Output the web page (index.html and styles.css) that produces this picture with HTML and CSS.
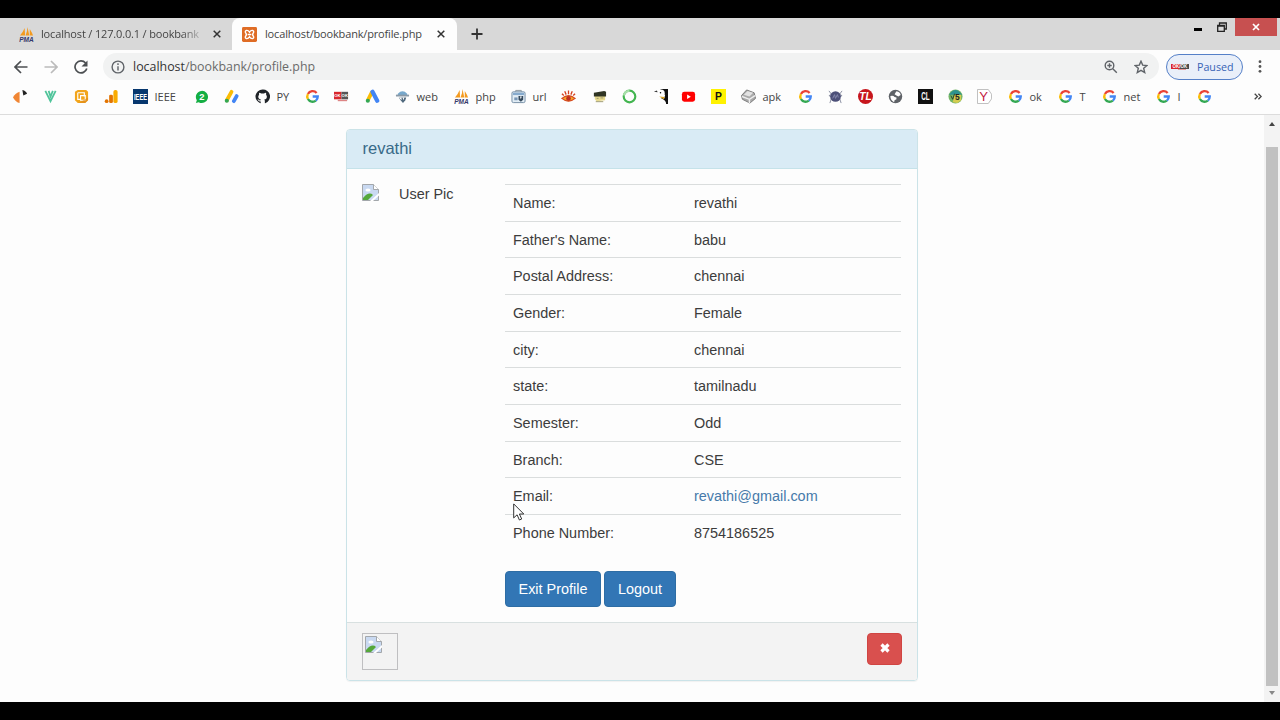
FILE: index.html
```html
<!DOCTYPE html>
<html lang="en">
<head>
  <meta charset="UTF-8">
  <title>localhost/bookbank/profile.php</title>
  <link rel="stylesheet" href="styles.css">
</head>
<body>
  <svg class="defs" width="0" height="0">
    <symbol id="google" viewBox="0 0 16 16">
      <g fill="none" stroke-width="2.5">
        <path d="M12.4 4.2A5.7 5.7 0 0 0 3.1 5.3" stroke="#ea4335"/>
        <path d="M3.1 5.3A5.7 5.7 0 0 0 3.1 10.7" stroke="#fbbc05"/>
        <path d="M3.1 10.7A5.7 5.7 0 0 0 11.6 12.4" stroke="#34a853"/>
        <path d="M11.6 12.4A5.7 5.7 0 0 0 13.6 8H8.2" stroke="#4285f4"/>
      </g>
    </symbol>
    <symbol id="broken" viewBox="0 0 17 17">
      <path d="M.5.500h11l5 5v11H.5z" fill="#c9d9f1" stroke="#a3a7ab"/>
      <path d="M11.500.500v5h5" fill="#fff" stroke="#a3a7ab"/>
      <ellipse cx="6" cy="6" rx="2.600" ry="1.600" fill="#fff"/>
      <path d="M1 16v-2q6-7 10-3l-5 5z" fill="#55a83b"/>
      <path d="M8 17L17 9v2.500L11 17z" fill="#fff"/>
    </symbol>
  </svg>

  <div class="tab-strip">
    <div class="tab">
      <svg class="icon" viewBox="0 0 16 16"><path d="M1 9Q4 6 6 1L6.500 9zM7 9Q9 5 9 0L11 9zM11.500 9V2Q14 6 15 9z" fill="#f39a1f"/><text x="8" y="15.700" class="pma-text">PMA</text></svg>
      <span class="tab-title faded">localhost / 127.0.0.1 / bookbank</span>
      <svg class="tab-close" viewBox="0 0 8 8"><path d="M.7.7l6.600 6.600M7.300.7L.7 7.300"/></svg>
    </div>
    <div class="tab active">
      <svg class="icon" viewBox="0 0 16 16">
        <rect width="16" height="16" rx="1.500" fill="#df6c25"/>
        <path d="M8 5.500C6 2.500 2.500 3.500 3.800 6Q5.500 8 3.800 10C2.500 12.500 6 13.500 8 10.500C10 13.500 13.500 12.500 12.200 10Q10.500 8 12.200 6C13.500 3.500 10 2.500 8 5.500zM6 8h4" fill="none" stroke="#fff" stroke-width="1.500"/>
      </svg>
      <span class="tab-title">localhost/bookbank/profile.php</span>
      <svg class="tab-close" viewBox="0 0 8 8"><path d="M.7.7l6.600 6.600M7.300.7L.7 7.300"/></svg>
    </div>
    <svg class="new-tab" viewBox="0 0 12 12"><path d="M6 .5v11M.5 6h11"/></svg>
    <div class="window-controls">
      <svg class="minimize" viewBox="0 0 8 3"><path d="M0 0h8v3H0z"/></svg>
      <svg class="restore" viewBox="0 0 10 10"><path d="M.7 3.500h6.600v5.800H.7zM.7 4h6.600M2.500 3V1h6.800v6H7.500"/></svg>
      <div class="window-close"><svg viewBox="0 0 8 8"><path d="M1 1l6 6M7 1L1 7"/></svg></div>
    </div>
  </div>

  <div class="toolbar">
    <svg class="nav" viewBox="0 0 14 14"><path d="M13.500 7H1.500M7 1L1 7l6 6"/></svg>
    <svg class="nav disabled" viewBox="0 0 14 14"><path d="M.5 7h12M7 1l6 6-6 6"/></svg>
    <svg class="nav" viewBox="0 0 14 14"><path d="M11.600 3A6 6 0 1 0 12.800 8.500"/><path class="solid" d="M13.500.5v6h-6z"/></svg>
    <div class="omnibox">
      <svg class="info" viewBox="0 0 14 14"><circle cx="7" cy="7" r="5.900"/><path d="M7 6.200v4.300M7 3.300v1.600"/></svg>
      <span class="url">localhost<em>/bookbank/profile.php</em></span>
      <svg class="zoom" viewBox="0 0 14 14"><circle cx="5.500" cy="5.500" r="4.300"/><path d="M8.800 8.800l4 4M3.300 5.500h4.400M5.500 3.300v4.400"/></svg>
      <svg class="star" viewBox="0 0 14 14"><path d="M7 1.200l1.700 3.900 4.200.4-3.200 2.800 1 4.200L7 10.300l-3.700 2.200 1-4.200L1.100 5.500l4.200-.4z"/></svg>
    </div>
    <div class="profile">
      <svg viewBox="0 0 18 8">
        <path fill="#d9262c" d="M0 1h10L8 6H0z"/><path fill="#4a4a4a" d="M10 1h8v5H8z"/><path fill="#e69999" d="M7 6h8v1H7z"/>
        <text x="9" y="5.200" class="paused-text">OK/OK</text>
      </svg>
      <span>Paused</span>
    </div>
    <svg class="menu" viewBox="0 0 4 13"><circle cx="2" cy="1.700" r="1.400"/><circle cx="2" cy="6.500" r="1.400"/><circle cx="2" cy="11.300" r="1.400"/></svg>
  </div>

  <div class="bookmarks">
    <div class="bookmark"><svg class="icon" viewBox="0 0 16 16"><path d="M0 9q2-4 7-6v12q-4-1-7-6z" fill="#f08634"/><path d="M10 1q4 1 5 4l-4 2z" fill="#222"/></svg></div>
    <div class="bookmark"><svg class="icon" viewBox="0 0 16 16"><path d="M2.500 2l5.500 11 5.500-11M6 2l2 6 2.500-6" fill="none" stroke="#4fc49a" stroke-width="1.900"/></svg></div>
    <div class="bookmark"><svg class="icon" viewBox="0 0 16 16"><path d="M4 1h9l2 2v9l-3 3H4l-3-3V3z" fill="#f2a51c"/><path d="M4 4h7v4M4 4v7h3M7 7h5v5H7z" fill="none" stroke="#fff" stroke-width="1.200"/><path d="M5 15L15 9v3l-3 3z" fill="#dc851b" opacity=".6"/></svg></div>
    <div class="bookmark"><svg class="icon" viewBox="0 0 16 16"><rect x="10" y="1" width="4.500" height="14" rx="2" fill="#f9ab00"/><rect x="5.500" y="6" width="4" height="9" rx="1.500" fill="#e37400"/><circle cx="2.800" cy="13" r="2" fill="#e37400"/></svg></div>
    <div class="bookmark"><svg class="icon" viewBox="0 0 16 16"><path d="M0 0h16v16H0z" fill="#07376e"/><text x="8" y="11.500" class="ieee-text" textLength="14" lengthAdjust="spacingAndGlyphs">IEEE</text></svg><span>IEEE</span></div>
    <div class="bookmark"><svg class="icon" viewBox="0 0 16 16"><path d="M8 2a6.500 6.500 0 1 1-3 12l-3 1 1-3A6.500 6.500 0 0 1 8 2z" fill="#14ae43"/><text x="8.500" y="12" class="badge-text">2</text></svg></div>
    <div class="bookmark"><svg class="icon" viewBox="0 0 16 16"><path d="M3 12L8 3" stroke="#fbbc04" stroke-width="4" stroke-linecap="round"/><path d="M10.500 13l3-5.500" stroke="#4285f4" stroke-width="4" stroke-linecap="round"/><circle cx="3" cy="12.500" r="2.200" fill="#34a853"/></svg></div>
    <div class="bookmark"><svg class="icon" viewBox="0 0 16 16"><path d="M8 .5a7.500 7.500 0 0 0-2.400 14.600c.4.100.5-.2.500-.4v-1.400c-2.100.4-2.600-1-2.700-1.300-.3-.7-.7-1-.9-1.100 1.700-.3 1.800 1.300 2.800 1.300.5 0 .9-.2 1-.9-3-.4-3.500-3.800-1.900-5.300-.2-.7-.1-1.400.1-2 .8 0 1.500.4 2.100.9 1-.2 2-.2 3 0 .6-.5 1.300-.9 2.100-.9.200.6.300 1.300.1 2 1.600 1.600 1 4.900-1.900 5.300.4.400.6.900.6 1.600v1.900c0 .2.100.4.400.3A7.500 7.500 0 0 0 8 .5z" fill="#1f2328"/></svg><span>PY</span></div>
    <div class="bookmark"><svg class="icon"><use href="#google"/></svg></div>
    <div class="bookmark"><svg class="icon" viewBox="0 0 16 16"><path fill="#d9262c" d="M0 3h8v8H0z"/><path fill="#555" d="M8 3h7v8H8z"/><path fill="#dd8585" d="M4 11.500h10V13H4z"/><text x="7.500" y="9" class="ok-text">OK OK</text></svg></div>
    <div class="bookmark"><svg class="icon" viewBox="0 0 16 16"><path d="M7.500 3L3 12" stroke="#fbbc04" stroke-width="4"/><path d="M8 3l5 9.500" stroke="#4285f4" stroke-width="4.500" stroke-linecap="round"/><circle cx="3" cy="12.500" r="2.200" fill="#34a853"/></svg></div>
    <div class="bookmark"><svg class="icon" viewBox="0 0 16 16"><path d="M3 5q5-5 10 0v2H3z" fill="#77a8cc"/><path d="M1 6h14v2H1z" fill="#8999a7"/><path d="M4 9h8l-1 3-2.500 3L6 12z" fill="#50697d"/><path d="M4 9h3v3zM8 9h2l-1 3z" fill="#fff"/></svg><span>web</span></div>
    <div class="bookmark"><svg class="icon" viewBox="0 0 16 16"><path d="M1 9Q4 6 6 1L6.500 9zM7 9Q9 5 9 0L11 9zM11.500 9V2Q14 6 15 9z" fill="#f39a1f"/><text x="8" y="15.700" class="pma-text">PMA</text></svg><span>php</span></div>
    <div class="bookmark"><svg class="icon" viewBox="0 0 16 16"><path d="M5 3V1.500h6V3" fill="none" stroke="#8b949c"/><rect x="1" y="3" width="14" height="11.500" rx="1.500" fill="#e2edf5" stroke="#718ba2"/><path d="M2 4h12v2.500H2z" fill="#86aacd"/><path d="M3.500 9H7v3H3.500z" fill="#7795b4"/><path d="M8 7.500h5v4l-2.500 2L8 11.500z" fill="#35495c"/><path d="M9.500 8h2l-1 3z" fill="#fff"/></svg><span>url</span></div>
    <div class="bookmark"><svg class="icon" viewBox="0 0 16 16"><path d="M1 10q7-6 14 0-7 6-14 0z" fill="#f6a52b" stroke="#d54a22" stroke-width="1.400"/><circle cx="8" cy="10" r="2.500" fill="#be2d20"/><path d="M1 5l2 2M4 2.500L5.500 6M8 1.500v4M12 2.500L10.500 6M15 5l-2 2" stroke="#d54020" stroke-width="1.400"/></svg></div>
    <div class="bookmark"><svg class="icon" viewBox="0 0 16 16"><path d="M3 7h11v5l-9 1-2-2z" fill="#e6d98e"/><path d="M2 4l11-2 2 1v5L2 8z" fill="#303524"/><path d="M5 10h2M9 9.500h3M4 13.500h8" stroke="#9a966b"/></svg></div>
    <div class="bookmark"><svg class="icon" viewBox="0 0 16 16"><circle cx="8" cy="8" r="6.200" fill="none" stroke="#43b550" stroke-width="2.300"/><path d="M2 7a6.200 6.200 0 0 1 6-5" fill="none" stroke="#a9dfaa" stroke-width="2.300"/></svg></div>
    <div class="bookmark"><svg class="icon" viewBox="0 0 16 16"><path d="M8 0h8v16h-2q0-4-5-6z" fill="#111"/><ellipse cx="8.500" cy="4.500" rx="4" ry="4" fill="#fff"/><path d="M6 5l7 1-1 4-5-1z" fill="#fff"/><path d="M1 3l3-1.500 1 2" fill="#333"/><path d="M6.500 8l6 .5-1 2.500z" fill="#dba322"/><circle cx="8" cy="4" r=".8"/></svg></div>
    <div class="bookmark"><svg class="icon" viewBox="0 0 16 16"><rect x="1" y="3" width="14" height="10.500" rx="2.500" fill="#f00"/><path d="M6.500 5.800l4 2.400-4 2.400z" fill="#fff"/></svg></div>
    <div class="bookmark"><svg class="icon" viewBox="0 0 16 16"><path d="M0 0h16v16H0z" fill="#fff200"/><text x="8" y="12" class="p-text">P</text></svg></div>
    <div class="bookmark"><svg class="icon" viewBox="0 0 16 16"><path d="M.5 7L6 1l8 3 1.500 6-6 5-8-4z" fill="#aaa" stroke="#777"/><path d="M3 6l4-4 6 2-4 4z" fill="#e2e2e2"/><path d="M1 8l8 3 6-4M9 11v4" fill="none" stroke="#eee" stroke-width="1.500"/></svg><span>apk</span></div>
    <div class="bookmark"><svg class="icon"><use href="#google"/></svg></div>
    <div class="bookmark"><svg class="icon" viewBox="0 0 16 16"><path d="M1 2l3 4-3 1 3 2-2 6M15 2l-3 4 3 1-3 2 2 6" fill="none" stroke="#888da0"/><circle cx="8" cy="8" r="5.700" fill="#4c5078"/><path d="M5 10l2-4 1 4 2-4 1 3" fill="none" stroke="#8589ad"/></svg></div>
    <div class="bookmark"><svg class="icon" viewBox="0 0 16 16"><circle cx="8" cy="8" r="8" fill="#c7161d"/><text x="8" y="12" class="tl-text">TL</text></svg></div>
    <div class="bookmark"><svg class="icon" viewBox="0 0 16 16"><circle cx="8" cy="8" r="7.200" fill="#5f6368"/><path d="M2.500 7.500q3-1 4.500 1l2 .5v2l-2 1-.5 2q-4-2-4-6.500zM9 2.500q4 .5 4.500 4L11 8 9 7 7 5.500z" fill="#fff"/></svg></div>
    <div class="bookmark"><svg class="icon" viewBox="0 0 16 16"><path d="M0 0h16v16H0z" fill="#111"/><text x="8" y="12" class="cl-text" textLength="9" lengthAdjust="spacingAndGlyphs">CL</text></svg></div>
    <div class="bookmark"><svg class="icon" viewBox="0 0 16 16"><circle cx="8" cy="8" r="7.500" fill="#74b565"/><path d="M1 6q7-10 14 0z" fill="#2d9290"/><path d="M5 14l2-8h7v6l-4 3z" fill="#d5cc50"/><path d="M3 7l2 4 2-6" fill="none" stroke="#253d28"/><text x="10" y="12" class="five-text">5</text></svg></div>
    <div class="bookmark"><svg class="icon" viewBox="0 0 16 16"><path d="M.5.500H12l3.500 5v5l-3.500 5H.5z" fill="#fff" stroke="#bbb"/><text x="7" y="13" class="y-text">Y</text></svg></div>
    <div class="bookmark"><svg class="icon"><use href="#google"/></svg><span>ok</span></div>
    <div class="bookmark"><svg class="icon"><use href="#google"/></svg><span>T</span></div>
    <div class="bookmark"><svg class="icon"><use href="#google"/></svg><span>net</span></div>
    <div class="bookmark"><svg class="icon"><use href="#google"/></svg><span>I</span></div>
    <div class="bookmark"><svg class="icon"><use href="#google"/></svg></div>
    <svg class="more" viewBox="0 0 8 7"><path d="M.7.7l2.800 2.800L.7 6.300M4.400.7l2.800 2.800-2.800 2.800"/></svg>
  </div>

  <div class="viewport">
    <div class="page">
      <div class="panel">
        <div class="panel-heading"><h3>revathi</h3></div>
        <div class="panel-body">
          <div class="user-pic"><svg class="broken"><use href="#broken"/></svg><span>User Pic</span></div>
          <div class="details">
            <table>
              <tr><td>Name:</td><td>revathi</td></tr>
              <tr><td>Father's Name:</td><td>babu</td></tr>
              <tr><td>Postal Address:</td><td>chennai</td></tr>
              <tr><td>Gender:</td><td>Female</td></tr>
              <tr><td>city:</td><td>chennai</td></tr>
              <tr><td>state:</td><td>tamilnadu</td></tr>
              <tr><td>Semester:</td><td>Odd</td></tr>
              <tr><td>Branch:</td><td>CSE</td></tr>
              <tr><td>Email:</td><td><a href="mailto:revathi@gmail.com">revathi@gmail.com</a></td></tr>
              <tr><td>Phone Number:</td><td>8754186525</td></tr>
            </table>
            <div class="buttons">
              <a class="btn btn-exit">Exit Profile</a>
              <a class="btn btn-logout">Logout</a>
            </div>
          </div>
        </div>
        <div class="panel-footer">
          <div class="footer-pic"><svg class="broken"><use href="#broken"/></svg></div>
          <a class="btn btn-danger"><svg viewBox="0 0 10 10"><path d="M1.500 1.500l7 7M8.500 1.500l-7 7"/></svg></a>
        </div>
      </div>
    </div>
    <div class="scrollbar">
      <svg viewBox="0 0 6 4"><path d="M0 4l3-4 3 4z" fill="#444"/></svg>
      <div class="thumb"></div>
      <svg viewBox="0 0 6 4"><path d="M0 0l3 4 3-4z" fill="#888"/></svg>
    </div>
  </div>

  <svg class="cursor" viewBox="0 0 12 18"><path d="M.7.900v14l3.400-3.100 2.300 5.200 2.300-1-2.300-5h4.400z"/></svg>
</body>
</html>
```
FILE: styles.css
```css
* {
  box-sizing: border-box;
}
body {
  margin: 0;
  width: 1280px;
  height: 720px;
  padding: 18px 0;
  background: #000;
  overflow: hidden;
  font-family: "Open Sans", "Noto Sans", sans-serif;
  color: #444;
}
.defs {
  position: absolute;
}
svg {
  display: block;
  flex: none;
}
.icon {
  width: 15px;
  height: 15px;
}

/* tabs */
.tab-strip {
  display: flex;
  height: 32px;
  background: #d8d8d8;
}
.tab {
  display: flex;
  align-items: center;
  width: 232px;
  padding-left: 19px;
  font-size: 11px;
}
.tab.active {
  width: 225px;
  padding-left: 10px;
  background: #fdfdfd;
  border-radius: 8px 8px 0 0;
}
.tab-title {
  width: 165px;
  margin: -2px 7px 0 7px;
  white-space: nowrap;
  letter-spacing: -0.160px;
}
.active .tab-title {
  width: 161px;
  margin: -2px 11px 0 8px;
}
.faded {
  -webkit-mask-image: linear-gradient(90deg, #000 85%, transparent);
  mask-image: linear-gradient(90deg, #000 85%, transparent);
}
.tab-close {
  width: 8px;
  height: 8px;
  fill: none;
  stroke: #333;
  stroke-width: 1.500;
}
.new-tab {
  width: 12px;
  height: 12px;
  margin: 10px 0 0 14px;
  stroke: #333;
  stroke-width: 1.800;
}
.window-controls {
  display: flex;
  align-items: flex-start;
  margin: 0 3px 0 auto;
}
.minimize {
  width: 8px;
  height: 3px;
  margin: 10px 15px 0 0;
}
.restore {
  width: 10px;
  height: 10px;
  margin: 4px 8px 0 0;
  fill: none;
  stroke: #222;
  stroke-width: 1.300;
}
.window-close {
  width: 42px;
  height: 18px;
  padding: 5px 17px;
  background: #c75050;
}
.window-close svg {
  width: 8px;
  height: 8px;
  stroke: #fff;
  stroke-width: 1.700;
}

/* toolbar */
.toolbar {
  display: flex;
  align-items: center;
  height: 33px;
  padding-left: 14px;
  background: #fdfdfd;
}
.nav {
  width: 14px;
  height: 14px;
  margin-right: 16px;
  fill: none;
  stroke: #4c4f52;
  stroke-width: 1.700;
}
.nav .solid {
  fill: #4c4f52;
  stroke: none;
}
.disabled {
  stroke: #bbb;
}
.omnibox {
  display: flex;
  align-items: center;
  width: 1056px;
  height: 27px;
  padding: 0 11px 0 8px;
  border-radius: 14px;
  background: #f1f2f2;
  margin-left: -1px;
}
.omnibox svg {
  width: 14px;
  height: 14px;
  fill: none;
  stroke: #5f6368;
  stroke-width: 1.400;
}
.url {
  margin: 0 auto 0 8px;
  font-size: 12.400px;
  color: #333;
}
.url em {
  font-style: normal;
  color: #6a6a6a;
}
.omnibox .star {
  margin-left: 16px;
}
.profile {
  display: flex;
  align-items: center;
  gap: 8px;
  width: 77px;
  height: 26px;
  margin-left: 7px;
  padding-left: 4px;
  border: 1px solid #5580c8;
  border-radius: 13px;
  background: #e9eff9;
  color: #3763b5;
  font-size: 10.700px;
}
.profile svg {
  width: 18px;
  height: 8px;
}
.menu {
  width: 4px;
  height: 13px;
  margin-left: 15px;
  fill: #555;
}

/* bookmarks bar */
.bookmarks {
  display: grid;
  grid-template-columns:
    30px 31px 30px 29px 61px 30px 31px 50px 29px 31px 30px
    59px 57px 50px 31px 30px 31px 28px 30px 30px 57px 30px
    30px 30px 30px 30px 29px 31px 50px 44px 54px 41px 57px 8px;
  align-items: center;
  height: 32px;
  padding: 0 0 4px 12.500px;
  background: #fdfdfd;
  border-bottom: 1px solid #dcdcdc;
}
.bookmark {
  display: flex;
  align-items: center;
  gap: 7px;
  font-size: 11px;
}
.bookmark span {
  margin-top: -1px;
}
.more {
  width: 8px;
  height: 7px;
  fill: none;
  stroke: #444;
  stroke-width: 1.300;
}
.pma-text, .ieee-text, .ok-text, .paused-text, .badge-text,
.p-text, .tl-text, .cl-text, .five-text, .y-text {
  font-family: "Liberation Sans", sans-serif;
  font-weight: bold;
  text-anchor: middle;
  fill: #fff;
}
.pma-text {
  font-size: 7px;
  font-style: italic;
  fill: #34386b;
}
.ieee-text {
  font-size: 9px;
}
.ok-text, .paused-text {
  font-size: 4.500px;
}
.badge-text {
  font-size: 10px;
}
.p-text {
  font-size: 11px;
  fill: #111;
}
.tl-text {
  font-size: 11px;
  font-style: italic;
}
.cl-text {
  font-size: 11px;
}
.five-text {
  font-size: 9px;
  fill: #222;
}
.y-text {
  font-size: 14px;
  font-weight: normal;
  fill: #c31d42;
}

/* page */
.viewport {
  display: flex;
  height: 587px;
  background: #fdfdfd;
  font-family: "Liberation Sans", Arial, sans-serif;
  font-size: 14.430px;
  color: #3c3c3c;
}
.page {
  flex: 1;
  padding: 14px 0 0 346px;
}
.panel {
  width: 572px;
  border: 1px solid #cbe3e8;
  border-radius: 4px;
  box-shadow: 0 1px 1px rgba(0, 0, 0, 0.05);
  overflow: hidden;
}
.panel-heading {
  height: 39px;
  padding-left: 15.500px;
  background: #d9ebf5;
  border-bottom: 1px solid #c5e2e9;
}
.panel-heading h3 {
  margin: 0;
  font-size: 16.500px;
  font-weight: normal;
  line-height: 36px;
  color: #386a88;
}
.panel-body {
  display: flex;
  height: 453px;
  padding: 15px 16px 0 15px;
}
.user-pic {
  display: flex;
  width: 143px;
}
.user-pic .broken {
  margin-right: 20px;
}
.user-pic span {
  margin-top: 1px;
  line-height: 18px;
}
.broken {
  width: 17px;
  height: 17px;
}
table {
  width: 396px;
  border-collapse: separate;
  border-spacing: 0;
  table-layout: fixed;
}
td {
  height: 36.680px;
  padding: 0 8px;
  border-top: 1px solid #dadddd;
}
td:first-child {
  width: 181px;
}
a {
  color: #477aaa;
  text-decoration: none;
}
.buttons {
  display: flex;
  gap: 3px;
  margin-top: 20px;
}
.btn {
  display: flex;
  justify-content: center;
  align-items: center;
  height: 36px;
  border: 1px solid #2e6da4;
  border-radius: 4px;
  background: #3276b5;
  color: #fff;
}
.btn-exit {
  width: 96px;
}
.btn-logout {
  width: 72px;
}
.panel-footer {
  display: flex;
  justify-content: space-between;
  height: 58px;
  padding: 10px 15px 0 15px;
  background: #f3f3f3;
  border-top: 1px solid #d8e0e0;
}
.footer-pic {
  width: 36px;
  height: 37px;
  padding: 2px;
  border: 1px solid #bfbfc1;
}
.btn-danger {
  width: 35px;
  height: 32px;
  padding-bottom: 2px;
  border-color: #d04542;
  background: #d9504e;
}
.btn-danger svg {
  width: 10px;
  height: 10px;
  stroke: #fff;
  stroke-width: 3.200;
}
.scrollbar {
  display: flex;
  flex-direction: column;
  align-items: center;
  justify-content: space-between;
  width: 16px;
  padding: 7px 0;
  background: #f3f3f3;
}
.scrollbar svg {
  width: 6px;
  height: 4px;
}
.thumb {
  width: 12px;
  height: 539px;
  margin-top: 16px;
  background: #c1c1c1;
}
.cursor {
  position: absolute;
  left: 512.500px;
  top: 503px;
  width: 12px;
  height: 18px;
  fill: #fff;
  stroke: #333;
}
```
